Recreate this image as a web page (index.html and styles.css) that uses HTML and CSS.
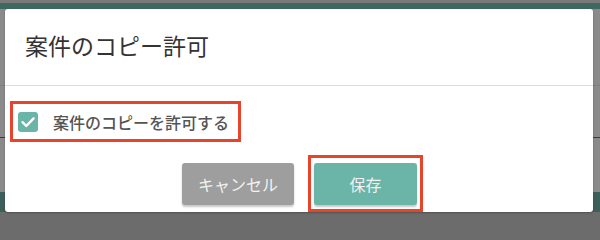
FILE: index.html
```html
<!DOCTYPE html>
<html lang="ja">
<head>
<meta charset="utf-8">
<link rel="stylesheet" href="styles.css">
</head>
<body>
<div class="page">
  <div class="page-top"></div>
  <div class="page-head"></div>
  <div class="page-main">
    <div class="page-rule page-rule-a"></div>
    <div class="page-rule page-rule-b"></div>
  </div>
  <div class="page-band"></div>
  <div class="page-foot"></div>
</div>

<div class="dialog">
  <div class="dialog-header">
    <h1 class="dialog-title">案件のコピー許可</h1>
  </div>
  <div class="dialog-body">
    <label class="check-row highlight">
      <span class="checkbox">
        <svg viewBox="0 0 20 20" width="20" height="20" aria-hidden="true">
          <path d="M4.5 10.2 L8.3 14 L15.6 6.4" fill="none" stroke="#fff" stroke-width="2.4" stroke-linecap="round" stroke-linejoin="round"/>
        </svg>
      </span>
      <span class="check-label">案件のコピーを許可する</span>
    </label>
  </div>
  <div class="dialog-footer">
    <button class="btn btn-cancel" type="button">キャンセル</button>
    <div class="save-wrap highlight">
      <button class="btn btn-save" type="button">保存</button>
    </div>
  </div>
</div>
</body>
</html>
```

FILE: styles.css
```css
* { box-sizing: border-box; }

html, body {
  margin: 0;
  padding: 0;
}

body {
  width: 600px;
  height: 221px;
  overflow: hidden;
  position: relative;
  background: #6c6c6c;
  font-family: "Noto Sans CJK JP", "Noto Sans", sans-serif;
}

/* dimmed background page */
.page {
  display: flex;
  flex-direction: column;
}
.page-top { height: 3px; background: #7a7a7a; }
.page-head { height: 6px; background: #3f6861; }
.page-main {
  height: 183px;
  background: #8a8a8a;
  position: relative;
}
.page-rule {
  position: absolute;
  left: 0;
  right: 0;
  height: 1px;
}
.page-rule-a { top: 76px; background: #7e7e7e; }
.page-rule-b { top: 128px; background: #3a3a3a; }
.page-band { height: 20px; background: #3c5f59; }
.page-foot { height: 9px; background: #6c6c6c; }

/* modal */
.dialog {
  position: absolute;
  left: 5px;
  top: 9px;
  width: 588px;
  height: 203px;
  background: #fff;
  border-radius: 3px;
  box-shadow: 0 1px 2px rgba(0,0,0,0.25);
}

.dialog-header {
  height: 77px;
  padding: 20px 20px 0;
  border-bottom: 1px solid #dedede;
}

.dialog-title {
  margin: 0;
  font-size: 23px;
  line-height: 32px;
  font-weight: 400;
  color: #333;
}

.dialog-body {
  padding: 15px 0 0 5px;
}

.highlight {
  border: 3px solid #e8432b;
}

.check-row {
  display: flex;
  align-items: center;
  width: 231px;
  height: 41px;
  padding: 0 0 0 5px;
}

.checkbox {
  width: 20px;
  height: 20px;
  border-radius: 3px;
  background: #6bb4a8;
  display: flex;
}

.check-label {
  margin-left: 15px;
  font-size: 16px;
  line-height: 20px;
  font-weight: 500;
  color: #555;
}

.dialog-footer {
  display: flex;
  align-items: flex-start;
  padding: 13px 0 0 177px;
  gap: 14px;
}

.btn {
  border: none;
  border-radius: 3px;
  font-family: inherit;
  font-size: 16px;
  color: #f2f2f2;
  height: 42px;
  box-shadow: 0 2px 2px rgba(0,0,0,0.22);
  padding: 0;
}

.btn-cancel {
  margin-top: 8px;
  width: 112px;
  background: #9e9e9e;
}

.save-wrap {
  padding: 5px 3px 4px;
  background: #fff;
}

.btn-save {
  display: block;
  width: 103px;
  background: #6bb4a8;
}
```
